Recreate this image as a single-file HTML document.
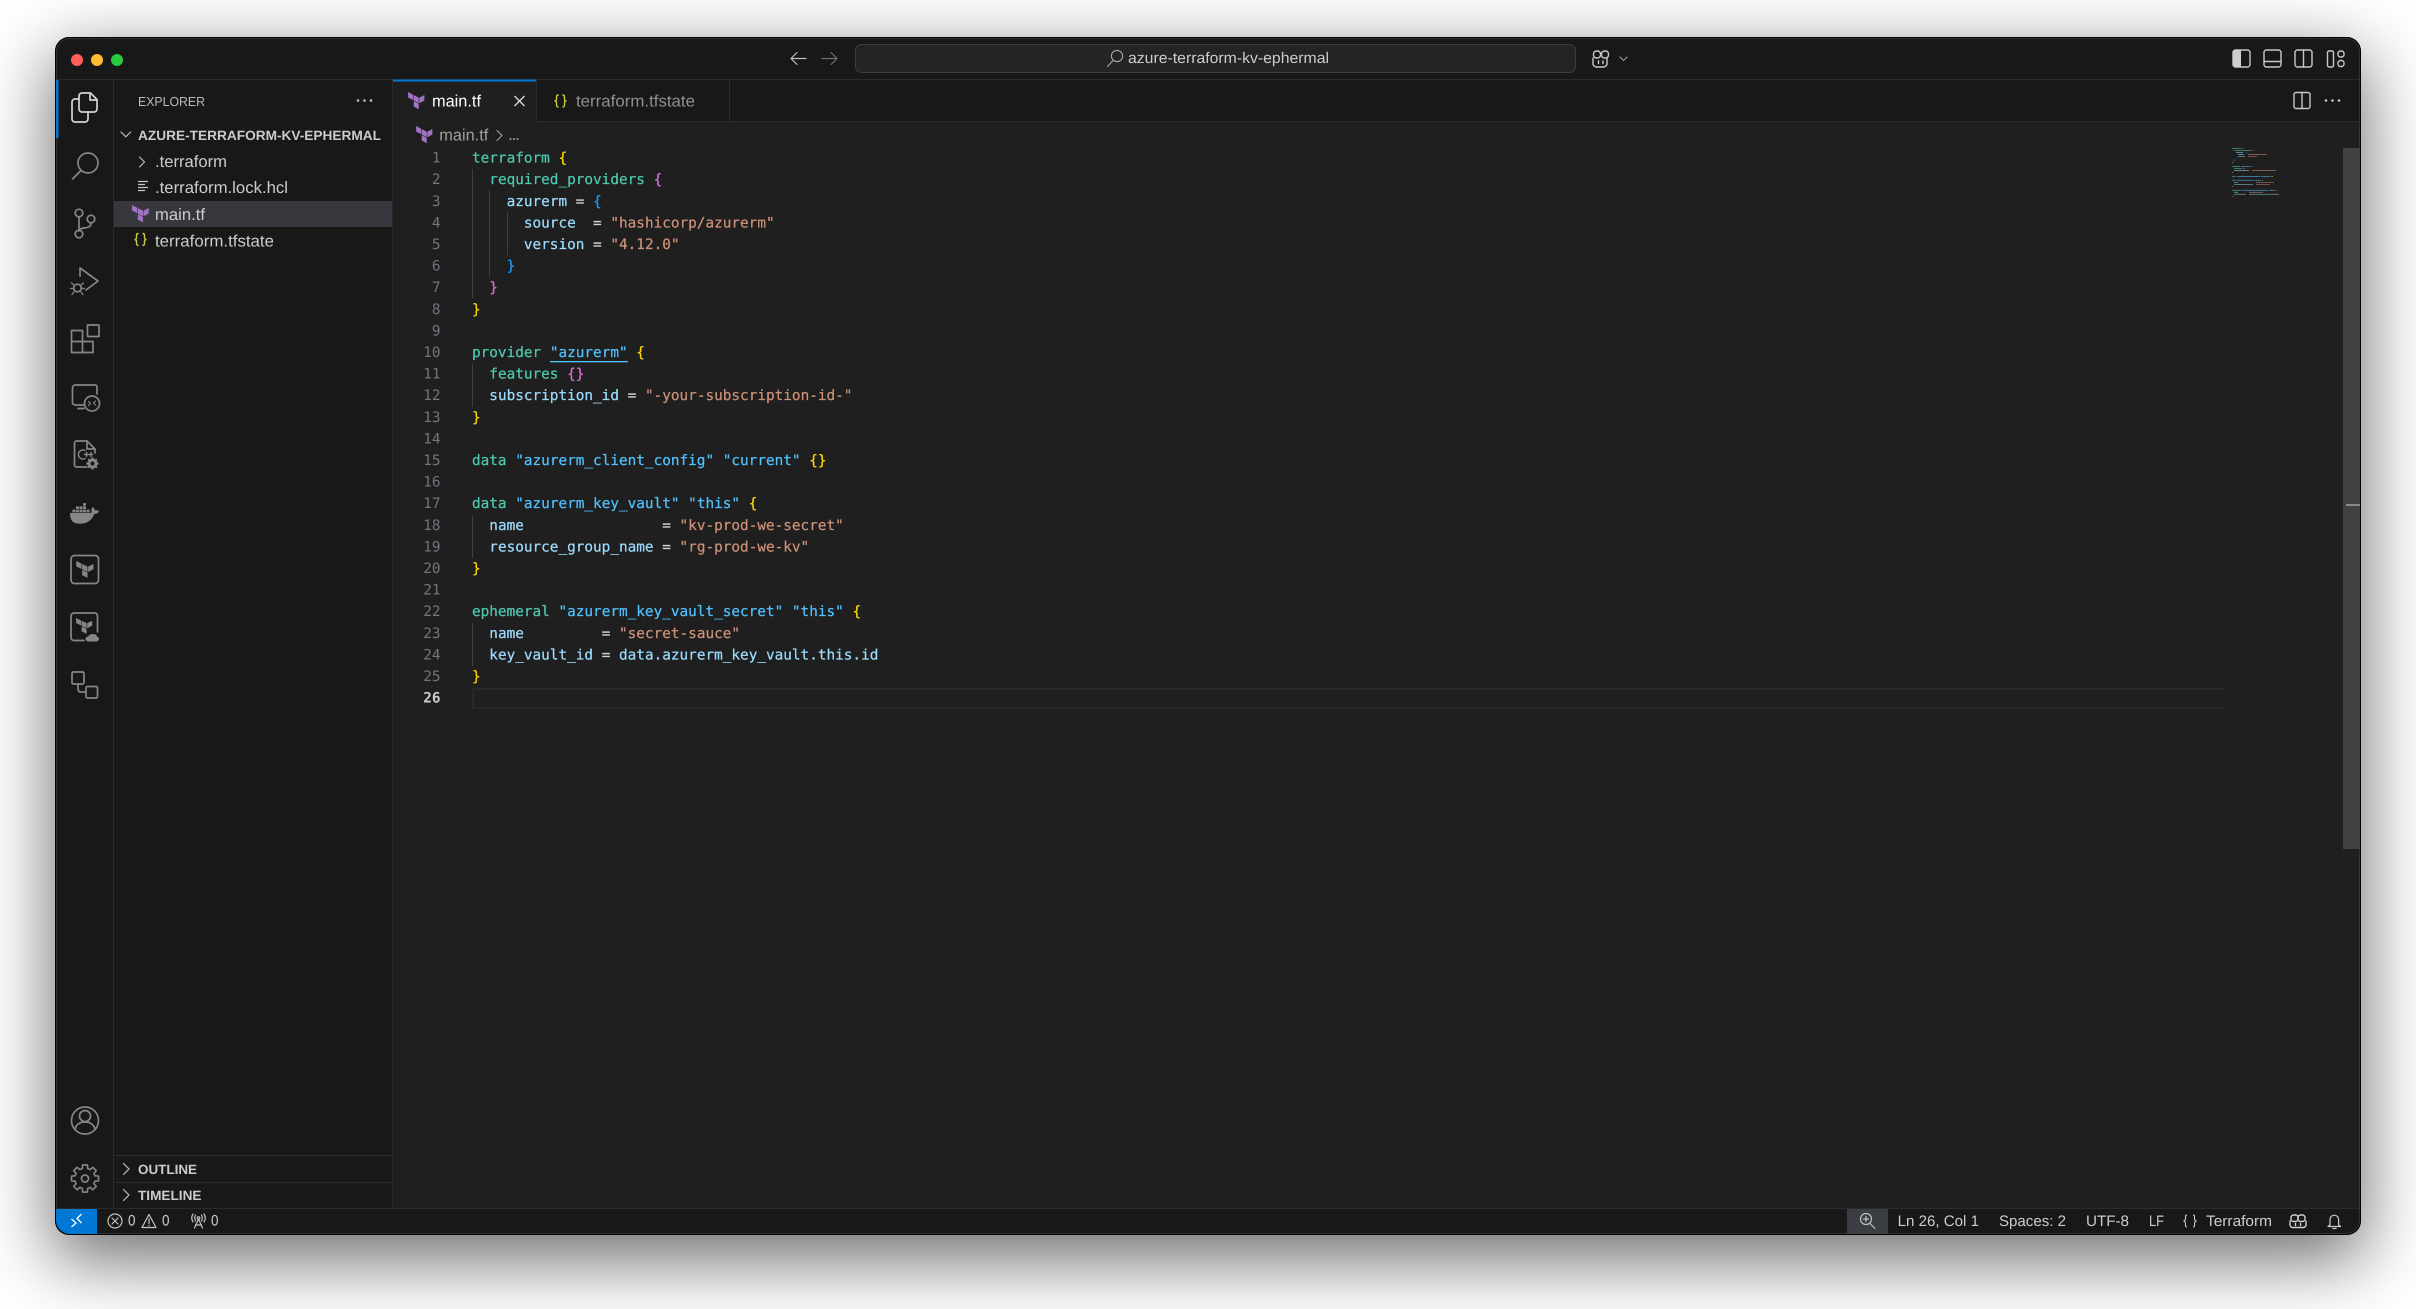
<!DOCTYPE html>
<html><head><meta charset="utf-8"><title>main.tf</title>
<style>
html,body{margin:0;padding:0;background:#fff;width:2416px;height:1309px;overflow:hidden}
.win{position:absolute;left:55px;top:37px;width:2306px;height:1198px;border-radius:14px;background:#181818;box-shadow:0 22px 70px 4px rgba(0,0,0,.56)}
svg{position:absolute;left:0;top:0}
text{font-family:"Liberation Sans",sans-serif;text-rendering:geometricPrecision}
.c text,text.c{font-family:"DejaVu Sans Mono","Liberation Mono",monospace;font-size:14.37px;white-space:pre}
.k{fill:#4ec9b0;stroke:#4ec9b0}.p{fill:#9cdcfe;stroke:#9cdcfe}.s{fill:#ce9178;stroke:#ce9178}.b{fill:#4fc1ff;stroke:#4fc1ff}.o{fill:#d4d4d4;stroke:#d4d4d4}.y{fill:#ffd700;stroke:#ffd700}.m{fill:#da70d6;stroke:#da70d6}.l{fill:#179fff;stroke:#179fff}
.c tspan{stroke-width:.22px}
.n{fill:#6e7681;text-anchor:end}
.u{font-size:16.5px;fill:#cccccc}
.h{font-size:13.4px;font-weight:bold;fill:#cccccc}
.st{font-size:15.2px;fill:#cccccc}
.i{fill:none;stroke:#868686;stroke-width:1.7;stroke-linecap:round;stroke-linejoin:round}
.j{fill:none;stroke:#c8c8c8;stroke-width:1.4;stroke-linecap:round;stroke-linejoin:round}
</style></head>
<body>
<div class="win"></div>
<svg width="2416" height="1309" viewBox="0 0 2416 1309" xmlns="http://www.w3.org/2000/svg">
<!-- editor bg -->
<rect x="393" y="121" width="1967" height="1087" fill="#1f1f1f"/>
<rect x="393" y="80" width="143" height="42" fill="#1f1f1f"/>
<!-- window edge -->
<rect x="55.5" y="37.5" width="2305" height="1197" rx="14" fill="none" stroke="#000" stroke-width="1"/>
<rect x="56.5" y="38.5" width="2303" height="1195" rx="13" fill="none" stroke="#5a5a5a" stroke-width="1" opacity=".4"/>
<!-- separators -->
<path d="M57 79.5H2360M113.5 80V1208M392.5 80V1208M57 1208.5H2360M729 121.5H2360M536.5 80V121M729.5 80V121M536 121.5H729M114 1155.5H392M114 1182.5H392" stroke="#2b2b2b" stroke-width="1" fill="none"/>
<!-- traffic -->
<circle cx="77" cy="60" r="6" fill="#ff5f57"/><circle cx="97" cy="60" r="6" fill="#febc2e"/><circle cx="117" cy="60" r="6" fill="#28c840"/>
<!-- title bar -->
<path class="j" d="M806 58.5H791M797 52.5l-6 6 6 6" style="stroke:#bdbdbd;stroke-width:1.200"/>
<path class="j" d="M822 58.5H837M831 52.5l6 6-6 6" style="stroke:#6e6e6e;stroke-width:1.200"/>
<rect x="855.5" y="44.5" width="720" height="28" rx="6" fill="#242424" stroke="#3d3d3d"/>
<circle cx="1117" cy="56" r="5.6" class="j" style="stroke:#a8a8a8;stroke-width:1.100"/><path class="j" d="M1113 60.5L1107.5 66.5" style="stroke:#a8a8a8;stroke-width:1.100"/>
<text x="1128" y="63.2" font-size="15.4" fill="#cccccc" textLength="201" lengthAdjust="spacingAndGlyphs">azure-terraform-kv-ephermal</text>
<g class="j"><rect x="1593.5" y="51" width="7" height="7" rx="3"/><rect x="1601.5" y="51" width="7" height="7" rx="3"/><path d="M1593 58v6q0 2 3 3h8q3-1 3-3v-6"/><path d="M1598.5 61v2.5M1603 61v2.5"/></g>
<path class="j" d="M1620 57l3.5 3.5 3.5-3.5" style="stroke:#999;stroke-width:1.1"/>
<!-- layout icons -->
<rect x="2233" y="50" width="17" height="17" rx="2.5" class="j"/><path d="M2233 52.5a2.5 2.5 0 0 1 2.5-2.5H2241V67h-5.500a2.500 2.500 0 0 1-2.500-2.500z" fill="#cfcfcf"/>
<rect x="2264" y="50" width="17" height="17" rx="2.500" class="j"/><path class="j" d="M2264 61.500H2281"/>
<rect x="2295" y="50" width="17" height="17" rx="2.500" class="j"/><path class="j" d="M2303.500 50V67"/>
<rect x="2327.500" y="51" width="6" height="16" rx="1.500" class="j"/><rect x="2338" y="51" width="6" height="6" rx="2.500" class="j"/><rect x="2338" y="60.500" width="6" height="6" rx="2.500" class="j"/>
<rect x="2294" y="92.500" width="16" height="16" rx="2" class="j"/><path class="j" d="M2302 92.500V108.500"/>
<g fill="#c8c8c8"><circle cx="2326" cy="100.500" r="1.300"/><circle cx="2332.500" cy="100.500" r="1.300"/><circle cx="2339" cy="100.500" r="1.300"/></g>
<!-- activity accent -->
<rect x="56" y="80" width="2.500" height="58" fill="#0078d4"/>
<!-- activity icons -->
<g class="i" style="stroke:#d4d4d4">
<path d="M79 99h-4a3 3 0 0 0-3 3v17a3 3 0 0 0 3 3h10a3 3 0 0 0 3-3v-7"/>
<path d="M79 96a3 3 0 0 1 3-3h8.500l6.500 6.500V109a3 3 0 0 1-3 3H82a3 3 0 0 1-3-3z"/>
<path d="M90 93.500V100h6.500"/>
</g>
<g class="i">
<circle cx="88" cy="163" r="10"/><path d="M81 170.500L72.500 179"/>
<circle cx="79" cy="213" r="3.800"/><circle cx="79" cy="234" r="3.800"/><circle cx="91" cy="219" r="3.800"/><path d="M79 217V230M91 223c0 4-3 4.500-7 5-3 .4-5 1-5 3"/>
<path d="M80 276v-8L98 281 86 290"/>
<circle cx="77.500" cy="288" r="3.800"/><path d="M74 285l-2.500-2M81 285l2.500-2M72.500 288.500h-2M82.500 288.500h2M74 292l-2 2.500M81 292l2 2.500" style="stroke-width:1.300"/>
<path d="M87.500 325H99V336.500H87.500zM71.500 330.500h11v22h-11zM71.500 341.500h21.500v11H82.500"/>
<path d="M84 405H75a3 3 0 0 1-2.500-2.500V388a3 3 0 0 1 2.500-3h20a2 2 0 0 1 2 2V394M78 408.500h6"/>
<circle cx="92" cy="403.500" r="7.500"/><path d="M88.500 401.500l2 2-2 2M95.500 401l-2 2 2 2" style="stroke-width:1.200"/>
<path d="M87 467H76.500a2 2 0 0 1-2-2V443a2 2 0 0 1 2-2H87l8 8v4"/><path d="M87 441v8h8"/>
<path d="M85 450.500a4.500 4.500 0 1 0 0 8M84.500 454.500h4M86.500 452.500v4M89.500 454.500h3M91 452.500v4" style="stroke-width:1.400"/>
</g>
<g transform="translate(92.500 463.500) scale(.44)" fill="#868686">
<circle r="11"/>
<path d="M-2.720-10.140L-2.430-13.790H2.430L2.720-10.140z"/><path transform="rotate(45)" d="M-2.720-10.140L-2.430-13.790H2.430L2.720-10.140z"/><path transform="rotate(90)" d="M-2.720-10.140L-2.430-13.790H2.430L2.720-10.140z"/><path transform="rotate(135)" d="M-2.720-10.140L-2.430-13.790H2.430L2.720-10.140z"/><path transform="rotate(180)" d="M-2.720-10.140L-2.430-13.790H2.430L2.720-10.140z"/><path transform="rotate(225)" d="M-2.720-10.140L-2.430-13.790H2.430L2.720-10.140z"/><path transform="rotate(270)" d="M-2.720-10.140L-2.430-13.790H2.430L2.720-10.140z"/><path transform="rotate(315)" d="M-2.720-10.140L-2.430-13.790H2.430L2.720-10.140z"/>
<circle r="4.500" fill="#181818"/>
</g>
<!-- docker -->
<path transform="translate(70 499) scale(1.200)" fill="#868686" d="M13.983 11.078h2.119a.186.186 0 00.186-.185V9.006a.186.186 0 00-.186-.186h-2.119a.185.185 0 00-.185.185v1.888c0 .102.083.185.185.185m-2.954-5.430h2.118a.186.186 0 00.186-.186V3.574a.186.186 0 00-.186-.185h-2.118a.185.185 0 00-.185.185v1.888c0 .102.082.185.185.186m0 2.716h2.118a.187.187 0 00.186-.186V6.290a.186.186 0 00-.186-.185h-2.118a.185.185 0 00-.185.185v1.887c0 .102.082.185.185.186m-2.930 0h2.120a.186.186 0 00.184-.186V6.290a.185.185 0 00-.185-.185H8.100a.185.185 0 00-.185.185v1.887c0 .102.083.185.185.186m-2.964 0h2.119a.186.186 0 00.185-.186V6.290a.185.185 0 00-.185-.185H5.136a.186.186 0 00-.186.185v1.887c0 .102.084.185.186.186m5.893 2.715h2.118a.186.186 0 00.186-.185V9.006a.186.186 0 00-.186-.186h-2.118a.185.185 0 00-.185.185v1.888c0 .102.082.185.185.185m-2.930 0h2.120a.185.185 0 00.184-.185V9.006a.185.185 0 00-.184-.186h-2.120a.185.185 0 00-.184.185v1.888c0 .102.083.185.185.185m-2.964 0h2.119a.185.185 0 00.185-.185V9.006a.185.185 0 00-.185-.186h-2.120a.186.186 0 00-.185.186v1.887c0 .102.084.185.186.185m-2.920 0h2.120a.185.185 0 00.184-.185V9.006a.185.185 0 00-.184-.186h-2.120a.185.185 0 00-.184.186v1.887c0 .102.082.185.185.185M23.763 9.890c-.065-.051-.672-.510-1.954-.510-.338.001-.676.030-1.010.087-.248-1.700-1.653-2.530-1.716-2.566l-.344-.199-.226.327c-.284.438-.490.922-.612 1.430-.230.970-.090 1.882.403 2.661-.595.332-1.550.413-1.744.420H.751a.751.751 0 00-.750.748 11.376 11.376 0 00.692 4.062c.545 1.428 1.355 2.480 2.410 3.124 1.180.723 3.100 1.137 5.275 1.137.983.003 1.963-.086 2.930-.266a12.248 12.248 0 003.823-1.389c.980-.567 1.860-1.288 2.610-2.136 1.252-1.418 1.998-2.997 2.553-4.400h.221c1.372 0 2.215-.549 2.680-1.009.309-.293.550-.650.707-1.046l.098-.288Z"/>
<!-- terraform boxes -->
<rect x="71" y="555.500" width="27.500" height="28" rx="3.500" class="i"/>
<path transform="translate(75 561) scale(.82 .70)" fill="#868686" d="M1.440 0v7.575l6.561 3.790V3.787zm21.120 4.227l-6.561 3.791v7.574l6.560-3.787zM8.720 4.230v7.575l6.561 3.787V8.018zm0 8.405v7.575L15.280 24v-7.578z"/>
<path class="i" d="M84 640.500H74a3 3 0 0 1-3-3V616a3 3 0 0 1 3-3h20.500a3 3 0 0 1 3 3V632"/>
<path transform="translate(75 618) scale(.76 .66)" fill="#868686" d="M1.440 0v7.575l6.561 3.790V3.787zm21.120 4.227l-6.561 3.791v7.574l6.560-3.787zM8.720 4.230v7.575l6.561 3.787V8.018zm0 8.405v7.575L15.280 24v-7.578z"/>
<path fill="#868686" d="M88 641.500q-2.500-.5-2.500-2.500t2.500-2.500q1.500-2.500 5-2.500t4 2.500q2 .5 2 2.500t-2.500 2.500z"/>
<g class="i">
<rect x="72" y="672" width="12" height="12" rx="1.500"/><rect x="86" y="686.500" width="11.500" height="11.500" rx="1.500"/><path d="M78 684v4.500q0 3.500 3 3.500h5"/>
<!-- account -->
<circle cx="85" cy="1120.500" r="13.500"/><circle cx="85" cy="1116" r="5.500"/><path d="M75 1129.500c1-5 5-7.500 10-7.500s9 2.500 10 7.500"/>
</g>
<!-- gear -->
<g transform="translate(85 1178.500) scale(.98)" class="i" style="stroke-width:1.650">
<path d="M-2.720-10.140L-2.430-13.790H2.430L2.720-10.140A10.500 10.500 0 0 1 5.250-9.090"/>
<path transform="rotate(45)" d="M-2.720-10.140L-2.430-13.790H2.430L2.720-10.140A10.500 10.500 0 0 1 5.250-9.090"/>
<path transform="rotate(90)" d="M-2.720-10.140L-2.430-13.790H2.430L2.720-10.140A10.500 10.500 0 0 1 5.250-9.090"/>
<path transform="rotate(135)" d="M-2.720-10.140L-2.430-13.790H2.430L2.720-10.140A10.500 10.500 0 0 1 5.250-9.090"/>
<path transform="rotate(180)" d="M-2.720-10.140L-2.430-13.790H2.430L2.720-10.140A10.500 10.500 0 0 1 5.250-9.090"/>
<path transform="rotate(225)" d="M-2.720-10.140L-2.430-13.790H2.430L2.720-10.140A10.500 10.500 0 0 1 5.250-9.090"/>
<path transform="rotate(270)" d="M-2.720-10.140L-2.430-13.790H2.430L2.720-10.140A10.500 10.500 0 0 1 5.250-9.090"/>
<path transform="rotate(315)" d="M-2.720-10.140L-2.430-13.790H2.430L2.720-10.140A10.500 10.500 0 0 1 5.250-9.090"/>
<circle r="3.600"/>
</g>
<!-- sidebar -->
<text x="138" y="106" font-size="13" fill="#bbbbbb" textLength="67" lengthAdjust="spacingAndGlyphs">EXPLORER</text>
<g fill="#c0c0c0"><circle cx="358" cy="100.500" r="1.300"/><circle cx="364.500" cy="100.500" r="1.300"/><circle cx="371" cy="100.500" r="1.300"/></g>
<path class="j" d="M121 132l4.800 4.800 4.800-4.800" style="stroke:#bdbdbd;stroke-width:1.200"/>
<text x="138" y="140" class="h" textLength="243" lengthAdjust="spacingAndGlyphs">AZURE-TERRAFORM-KV-EPHERMAL</text>
<path class="j" d="M139.500 157l5 5-5 5" style="stroke:#bdbdbd;stroke-width:1.200"/>
<text x="155" y="167" class="u" textLength="72" lengthAdjust="spacingAndGlyphs">.terraform</text>
<path d="M138 181.500h10M138 184.500h7M138 187.500h10M138 190.500h7" stroke="#c5c5c5" stroke-width="1.300" fill="none"/>
<text x="155" y="193" class="u" textLength="133" lengthAdjust="spacingAndGlyphs">.terraform.lock.hcl</text>
<rect x="114" y="201" width="278" height="26" fill="#37373d"/>
<path transform="translate(130.900 205) scale(.79 .72)" fill="#a074c4" d="M1.440 0v7.575l6.561 3.790V3.787zm21.120 4.227l-6.561 3.791v7.574l6.560-3.787zM8.720 4.230v7.575l6.561 3.787V8.018zm0 8.405v7.575L15.280 24v-7.578z"/>
<text x="155" y="220" class="u" textLength="50" lengthAdjust="spacingAndGlyphs">main.tf</text>
<g fill="none" stroke="#cbcb41" stroke-width="1.400"><path d="M138.500 233.500q-2 0-2 2v2q0 2-2 2q2 0 2 2v2q0 2 2 2"/><path d="M142.500 233.500q2 0 2 2v2q0 2 2 2q-2 0-2 2v2q0 2-2 2"/></g>
<text x="155" y="246.700" class="u" textLength="119" lengthAdjust="spacingAndGlyphs">terraform.tfstate</text>
<path class="j" d="M123.500 1163.500l5.500 5.500-5.500 5.500M123.500 1189.500l5.500 5.500-5.500 5.500" style="stroke:#bdbdbd;stroke-width:1.200"/>
<text x="138" y="1174" class="h" textLength="59" lengthAdjust="spacingAndGlyphs">OUTLINE</text>
<text x="138" y="1200" class="h" textLength="63.500" lengthAdjust="spacingAndGlyphs">TIMELINE</text>
<!-- tabs -->
<rect x="393" y="79.500" width="143" height="2" fill="#0078d4"/>
<path transform="translate(407 92) scale(.77 .72)" fill="#a074c4" d="M1.440 0v7.575l6.561 3.790V3.787zm21.120 4.227l-6.561 3.791v7.574l6.560-3.787zM8.720 4.230v7.575l6.561 3.787V8.018zm0 8.405v7.575L15.280 24v-7.578z"/>
<text x="432" y="106.700" class="u" style="fill:#ffffff" textLength="49" lengthAdjust="spacingAndGlyphs">main.tf</text>
<path d="M514.500 96l10 10M524.500 96l-10 10" stroke="#d8d8d8" stroke-width="1.400" fill="none"/>
<g fill="none" stroke="#cbcb41" stroke-width="1.400"><path d="M558.500 95q-2 0-2 2v2q0 2-2 2q2 0 2 2v2q0 2 2 2"/><path d="M562.500 95q2 0 2 2v2q0 2 2 2q-2 0-2 2v2q0 2-2 2"/></g>
<text x="576" y="106.700" class="u" style="fill:#8f8f8f" textLength="119" lengthAdjust="spacingAndGlyphs">terraform.tfstate</text>
<!-- breadcrumb -->
<path transform="translate(415 126) scale(.77 .72)" fill="#a074c4" d="M1.440 0v7.575l6.561 3.790V3.787zm21.120 4.227l-6.561 3.791v7.574l6.560-3.787zM8.720 4.230v7.575l6.561 3.787V8.018zm0 8.405v7.575L15.280 24v-7.578z"/>
<text x="439.300" y="140.700" class="u" style="fill:#a0a0a0" textLength="49" lengthAdjust="spacingAndGlyphs">main.tf</text>
<path class="j" d="M497 130.500l5 5-5 5" style="stroke:#9a9a9a;stroke-width:1.200"/>
<g fill="#a0a0a0"><circle cx="510.500" cy="139" r="1"/><circle cx="514" cy="139" r="1"/><circle cx="517.500" cy="139" r="1"/></g>
<!-- indent guides -->
<path d="M472.500 169V298M489.500 190.500V277M507.500 212V255M472.500 363.500V407M472.500 515.500V558M472.500 623V666" stroke="#404040" stroke-width="1" fill="none"/>
<!-- current line -->
<path d="M2225 689H473V708H2225" fill="none" stroke="#282828" stroke-width="2"/>
<!-- link underline -->
<rect x="550" y="361" width="78" height="1.300" fill="#4fc1ff"/>
<!-- line numbers -->
<g class="c" transform="translate(0 -.8)">
<text class="n" x="440.500" y="163.400">1</text><text class="n" x="440.500" y="185">2</text><text class="n" x="440.500" y="206.600">3</text><text class="n" x="440.500" y="228.200">4</text><text class="n" x="440.500" y="249.800">5</text><text class="n" x="440.500" y="271.400">6</text><text class="n" x="440.500" y="293">7</text><text class="n" x="440.500" y="314.600">8</text><text class="n" x="440.500" y="336.200">9</text><text class="n" x="440.500" y="357.800">10</text><text class="n" x="440.500" y="379.400">11</text><text class="n" x="440.500" y="401">12</text><text class="n" x="440.500" y="422.600">13</text><text class="n" x="440.500" y="444.200">14</text><text class="n" x="440.500" y="465.800">15</text><text class="n" x="440.500" y="487.400">16</text><text class="n" x="440.500" y="509">17</text><text class="n" x="440.500" y="530.600">18</text><text class="n" x="440.500" y="552.200">19</text><text class="n" x="440.500" y="573.800">20</text><text class="n" x="440.500" y="595.400">21</text><text class="n" x="440.500" y="617">22</text><text class="n" x="440.500" y="638.600">23</text><text class="n" x="440.500" y="660.200">24</text><text class="n" x="440.500" y="681.800">25</text><text class="n" x="440.500" y="703.400" style="fill:#cccccc;font-weight:bold">26</text>
<!-- code -->
<text x="472" y="163.400" xml:space="preserve"><tspan class="k">terraform</tspan> <tspan class="y">{</tspan></text>
<text x="472" y="185" xml:space="preserve">  <tspan class="k">required_providers</tspan> <tspan class="m">{</tspan></text>
<text x="472" y="206.600" xml:space="preserve">    <tspan class="p">azurerm</tspan> <tspan class="o">=</tspan> <tspan class="l">{</tspan></text>
<text x="472" y="228.200" xml:space="preserve">      <tspan class="p">source</tspan>  <tspan class="o">=</tspan> <tspan class="s">"hashicorp/azurerm"</tspan></text>
<text x="472" y="249.800" xml:space="preserve">      <tspan class="p">version</tspan> <tspan class="o">=</tspan> <tspan class="s">"4.12.0"</tspan></text>
<text x="472" y="271.400" xml:space="preserve">    <tspan class="l">}</tspan></text>
<text x="472" y="293" xml:space="preserve">  <tspan class="m">}</tspan></text>
<text x="472" y="314.600" xml:space="preserve"><tspan class="y">}</tspan></text>
<text x="472" y="357.800" xml:space="preserve"><tspan class="k">provider</tspan> <tspan class="b">"azurerm"</tspan> <tspan class="y">{</tspan></text>
<text x="472" y="379.400" xml:space="preserve">  <tspan class="k">features</tspan> <tspan class="m">{}</tspan></text>
<text x="472" y="401" xml:space="preserve">  <tspan class="p">subscription_id</tspan> <tspan class="o">=</tspan> <tspan class="s">"-your-subscription-id-"</tspan></text>
<text x="472" y="422.600" xml:space="preserve"><tspan class="y">}</tspan></text>
<text x="472" y="465.800" xml:space="preserve"><tspan class="k">data</tspan> <tspan class="b">"azurerm_client_config"</tspan> <tspan class="b">"current"</tspan> <tspan class="y">{}</tspan></text>
<text x="472" y="509" xml:space="preserve"><tspan class="k">data</tspan> <tspan class="b">"azurerm_key_vault"</tspan> <tspan class="b">"this"</tspan> <tspan class="y">{</tspan></text>
<text x="472" y="530.600" xml:space="preserve">  <tspan class="p">name</tspan>                <tspan class="o">=</tspan> <tspan class="s">"kv-prod-we-secret"</tspan></text>
<text x="472" y="552.200" xml:space="preserve">  <tspan class="p">resource_group_name</tspan> <tspan class="o">=</tspan> <tspan class="s">"rg-prod-we-kv"</tspan></text>
<text x="472" y="573.800" xml:space="preserve"><tspan class="y">}</tspan></text>
<text x="472" y="617" xml:space="preserve"><tspan class="k">ephemeral</tspan> <tspan class="b">"azurerm_key_vault_secret"</tspan> <tspan class="b">"this"</tspan> <tspan class="y">{</tspan></text>
<text x="472" y="638.600" xml:space="preserve">  <tspan class="p">name</tspan>         <tspan class="o">=</tspan> <tspan class="s">"secret-sauce"</tspan></text>
<text x="472" y="660.200" xml:space="preserve">  <tspan class="p">key_vault_id</tspan> <tspan class="o">=</tspan> <tspan class="p">data.azurerm_key_vault.this.id</tspan></text>
<text x="472" y="681.800" xml:space="preserve"><tspan class="y">}</tspan></text>
</g>
<!-- minimap -->
<g transform="translate(2232 147.500) scale(1 1.060)" stroke-width=".8" fill="none" opacity=".62">
<path stroke="#4ec9b0" d="M0 1H9M2 2.900H20M0 18H8M2 19.900H10M0 27.300H4M0 31H4M0 40.400H9"/>
<path stroke="#9cdcfe" d="M4 4.800H11M6 6.700H12M6 8.500H13M2 21.800H17M2 32.900H6M2 34.800H21M2 42.300H6M2 44.100H14M17 44.100H47"/>
<path stroke="#ce9178" d="M16 6.700H35M16 8.500H25M20 21.800H44M24 32.900H42M24 34.800H38M17 42.300H31"/>
<path stroke="#4fc1ff" d="M9 18H18M5 27.300H28M29 27.300H38M5 31H22M23 31H29M10 40.400H36M37 40.400H43"/>
<path stroke="#ffd700" d="M10 1H11M0 14H1M19 18H20M0 23.600H1M39 27.300H41M30 31H31M0 36.600H1M44 40.400H45M0 46H1"/>
<path stroke="#da70d6" d="M21 2.900H22M2 12H3M11 19.900H13"/>
<path stroke="#179fff" d="M14 4.800H15M4 10.400H5"/>
</g>
<!-- scrollbar -->
<rect x="2343" y="148" width="17" height="701" fill="#424242"/>
<rect x="2346" y="504" width="14" height="2" fill="#8a8a8a"/>
<!-- status bar -->
<path d="M56 1209H97V1234H70a14 14 0 0 1-14-14z" fill="#0078d4"/>
<path d="M71.500 1219l4.500 4-4.500 4M81.500 1214l-4.500 4.500 4.500 4.500" fill="none" stroke="#fff" stroke-width="1.300"/>
<g class="j" style="stroke:#c4c4c4;stroke-width:1.200">
<circle cx="115" cy="1221" r="7"/><path d="M112 1218l6 6M118 1218l-6 6"/>
<path d="M149 1214.500l7 13H142z"/><path d="M149 1219v4.500M149 1225.300v.4"/>
<path d="M198.500 1219l-4 9M198.500 1219l4 9M195.500 1225h6"/><circle cx="198.500" cy="1218" r="1.300"/><path d="M195.500 1215q-1.500 3 0 6M201.500 1215q1.500 3 0 6M193 1214q-2.500 4 0 8M204 1214q2.500 4 0 8"/>
</g>
<text x="128" y="1225.700" class="st" textLength="7.500" lengthAdjust="spacingAndGlyphs">0</text>
<text x="162" y="1225.700" class="st" textLength="7.500" lengthAdjust="spacingAndGlyphs">0</text>
<text x="211" y="1225.700" class="st" textLength="7.500" lengthAdjust="spacingAndGlyphs">0</text>
<rect x="1847" y="1209" width="41" height="25" fill="#3a3d41"/>
<g class="j" style="stroke:#c0c0c0;stroke-width:1.200"><circle cx="1866" cy="1219" r="5.500"/><path d="M1870 1223.500l5 5M1863.500 1219h5M1866 1216.500v5"/></g>
<text x="1897.600" y="1226" class="st" textLength="81.400" lengthAdjust="spacingAndGlyphs">Ln 26, Col 1</text>
<text x="1999" y="1226" class="st" textLength="67" lengthAdjust="spacingAndGlyphs">Spaces: 2</text>
<text x="2086" y="1226" class="st" textLength="43" lengthAdjust="spacingAndGlyphs">UTF-8</text>
<text x="2149" y="1226" class="st" textLength="15" lengthAdjust="spacingAndGlyphs">LF</text>
<g fill="none" stroke="#cccccc" stroke-width="1.100"><path d="M2187 1215q-1.500 0-1.500 1.500v2q0 2-2 2.500q2 .5 2 2.500v2q0 1.500 1.500 1.500"/><path d="M2193 1215q1.500 0 1.500 1.500v2q0 2 2 2.500q-2 .5-2 2.500v2q0 1.500-1.500 1.500"/></g>
<text x="2206" y="1226" class="st" textLength="66" lengthAdjust="spacingAndGlyphs">Terraform</text>
<g class="j" style="stroke:#cfcfcf"><rect x="2291" y="1215" width="7" height="6.500" rx="2.500"/><rect x="2298" y="1215" width="7" height="6.500" rx="2.500"/><path d="M2290 1221v4q0 1.500 2 2.500h12q2-1 2-2.500v-4"/><path d="M2295.500 1223.500v2M2300.500 1223.500v2"/></g>
<path class="j" d="M2330 1225v-5.500a4.300 4.300 0 0 1 8.600 0v5.500l2 1.500h-12.600zM2332.800 1228.500h3.200" style="stroke:#cccccc;stroke-width:1.200"/>
</svg>
</body></html>
